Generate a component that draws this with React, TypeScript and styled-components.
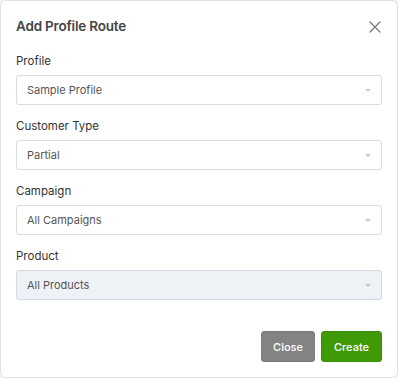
import styled, { createGlobalStyle } from 'styled-components';

const GlobalStyle = createGlobalStyle`
  html, body {
    margin: 0;
    padding: 0;
    background: #f4f4f4;
  }
  body {
    font-family: Inter, 'Open Sans', sans-serif;
  }
`;

const fields = [
  { label: 'Profile', value: 'Sample Profile', disabled: false },
  { label: 'Customer Type', value: 'Partial', disabled: false },
  { label: 'Campaign', value: 'All Campaigns', disabled: false },
  { label: 'Product', value: 'All Products', disabled: true },
];

const App = () => {
  return (
    <>
      <GlobalStyle />
      <Modal>
        <Header>
          <Title>Add Profile Route</Title>
          <CloseIcon>
            <svg width='12' height='12' viewBox='0 0 12 12'>
              <path d='M1 1L11 11M11 1L1 11' stroke='#7a7a7a' strokeWidth='1.3' strokeLinecap='round' />
            </svg>
          </CloseIcon>
        </Header>
        <Body>
          {fields.map((f) => (
            <Field key={f.label}>
              <Label>{f.label}</Label>
              <Select $disabled={f.disabled}>
                <SelectText>{f.value}</SelectText>
                <Caret />
              </Select>
            </Field>
          ))}
        </Body>
        <Footer>
          <Button $variant='close'>Close</Button>
          <Button $variant='create'>Create</Button>
        </Footer>
      </Modal>
    </>
  );
};

export default App;

const Modal = styled.div`
  box-sizing: border-box;
  width: 398px;
  height: 378px;
  background: #fff;
  border: 1px solid #e2e2e2;
  border-radius: 6px;
  display: flex;
  flex-direction: column;
`;

const Header = styled.div`
  display: flex;
  justify-content: space-between;
  align-items: center;
  padding: 15px 15px 0 15px;
`;

const Title = styled.h3`
  margin: 0;
  font-size: 13.5px;
  line-height: 20px;
  font-weight: 600;
  color: #454545;
  letter-spacing: -0.2px;
`;

const CloseIcon = styled.span`
  display: flex;
  width: 12px;
  height: 12px;
  margin-right: 1px;
  margin-top: 2px;
`;

const Body = styled.div`
  display: flex;
  flex-direction: column;
  gap: 12px;
  padding: 16px 15px 0 15px;
`;

const Field = styled.div`
  display: flex;
  flex-direction: column;
  gap: 5px;
`;

const Label = styled.label`
  font-size: 11.5px;
  line-height: 18px;
  color: #333;
`;

const Select = styled.div<{ $disabled: boolean }>`
  box-sizing: border-box;
  height: 30px;
  display: flex;
  align-items: center;
  justify-content: space-between;
  padding: 0 10px;
  border: 1px solid ${(p) => (p.$disabled ? '#d5dae0' : '#dcdcdc')};
  border-radius: 3px;
  background: ${(p) => (p.$disabled ? '#eef1f6' : '#fff')};
`;

const SelectText = styled.span`
  font-size: 11px;
  color: #555;
`;

const Caret = styled.span`
  width: 0;
  height: 0;
  border-left: 3.5px solid transparent;
  border-right: 3.5px solid transparent;
  border-top: 3.5px solid #c8c8c8;
`;

const Footer = styled.div`
  display: flex;
  justify-content: flex-end;
  gap: 6px;
  margin-top: auto;
  padding: 0 15px 15px 15px;
`;

const Button = styled.button<{ $variant: 'close' | 'create' }>`
  height: 31px;
  padding: 0 ${(p) => (p.$variant === 'close' ? '11px' : '12px')};
  border: 1px solid ${(p) => (p.$variant === 'close' ? '#7a7a7a' : '#3a8f05')};
  border-radius: 3px;
  background: ${(p) => (p.$variant === 'close' ? '#838383' : '#409a08')};
  color: #fff;
  font-family: Inter, sans-serif;
  font-size: 11px;
  font-weight: 500;
`;
